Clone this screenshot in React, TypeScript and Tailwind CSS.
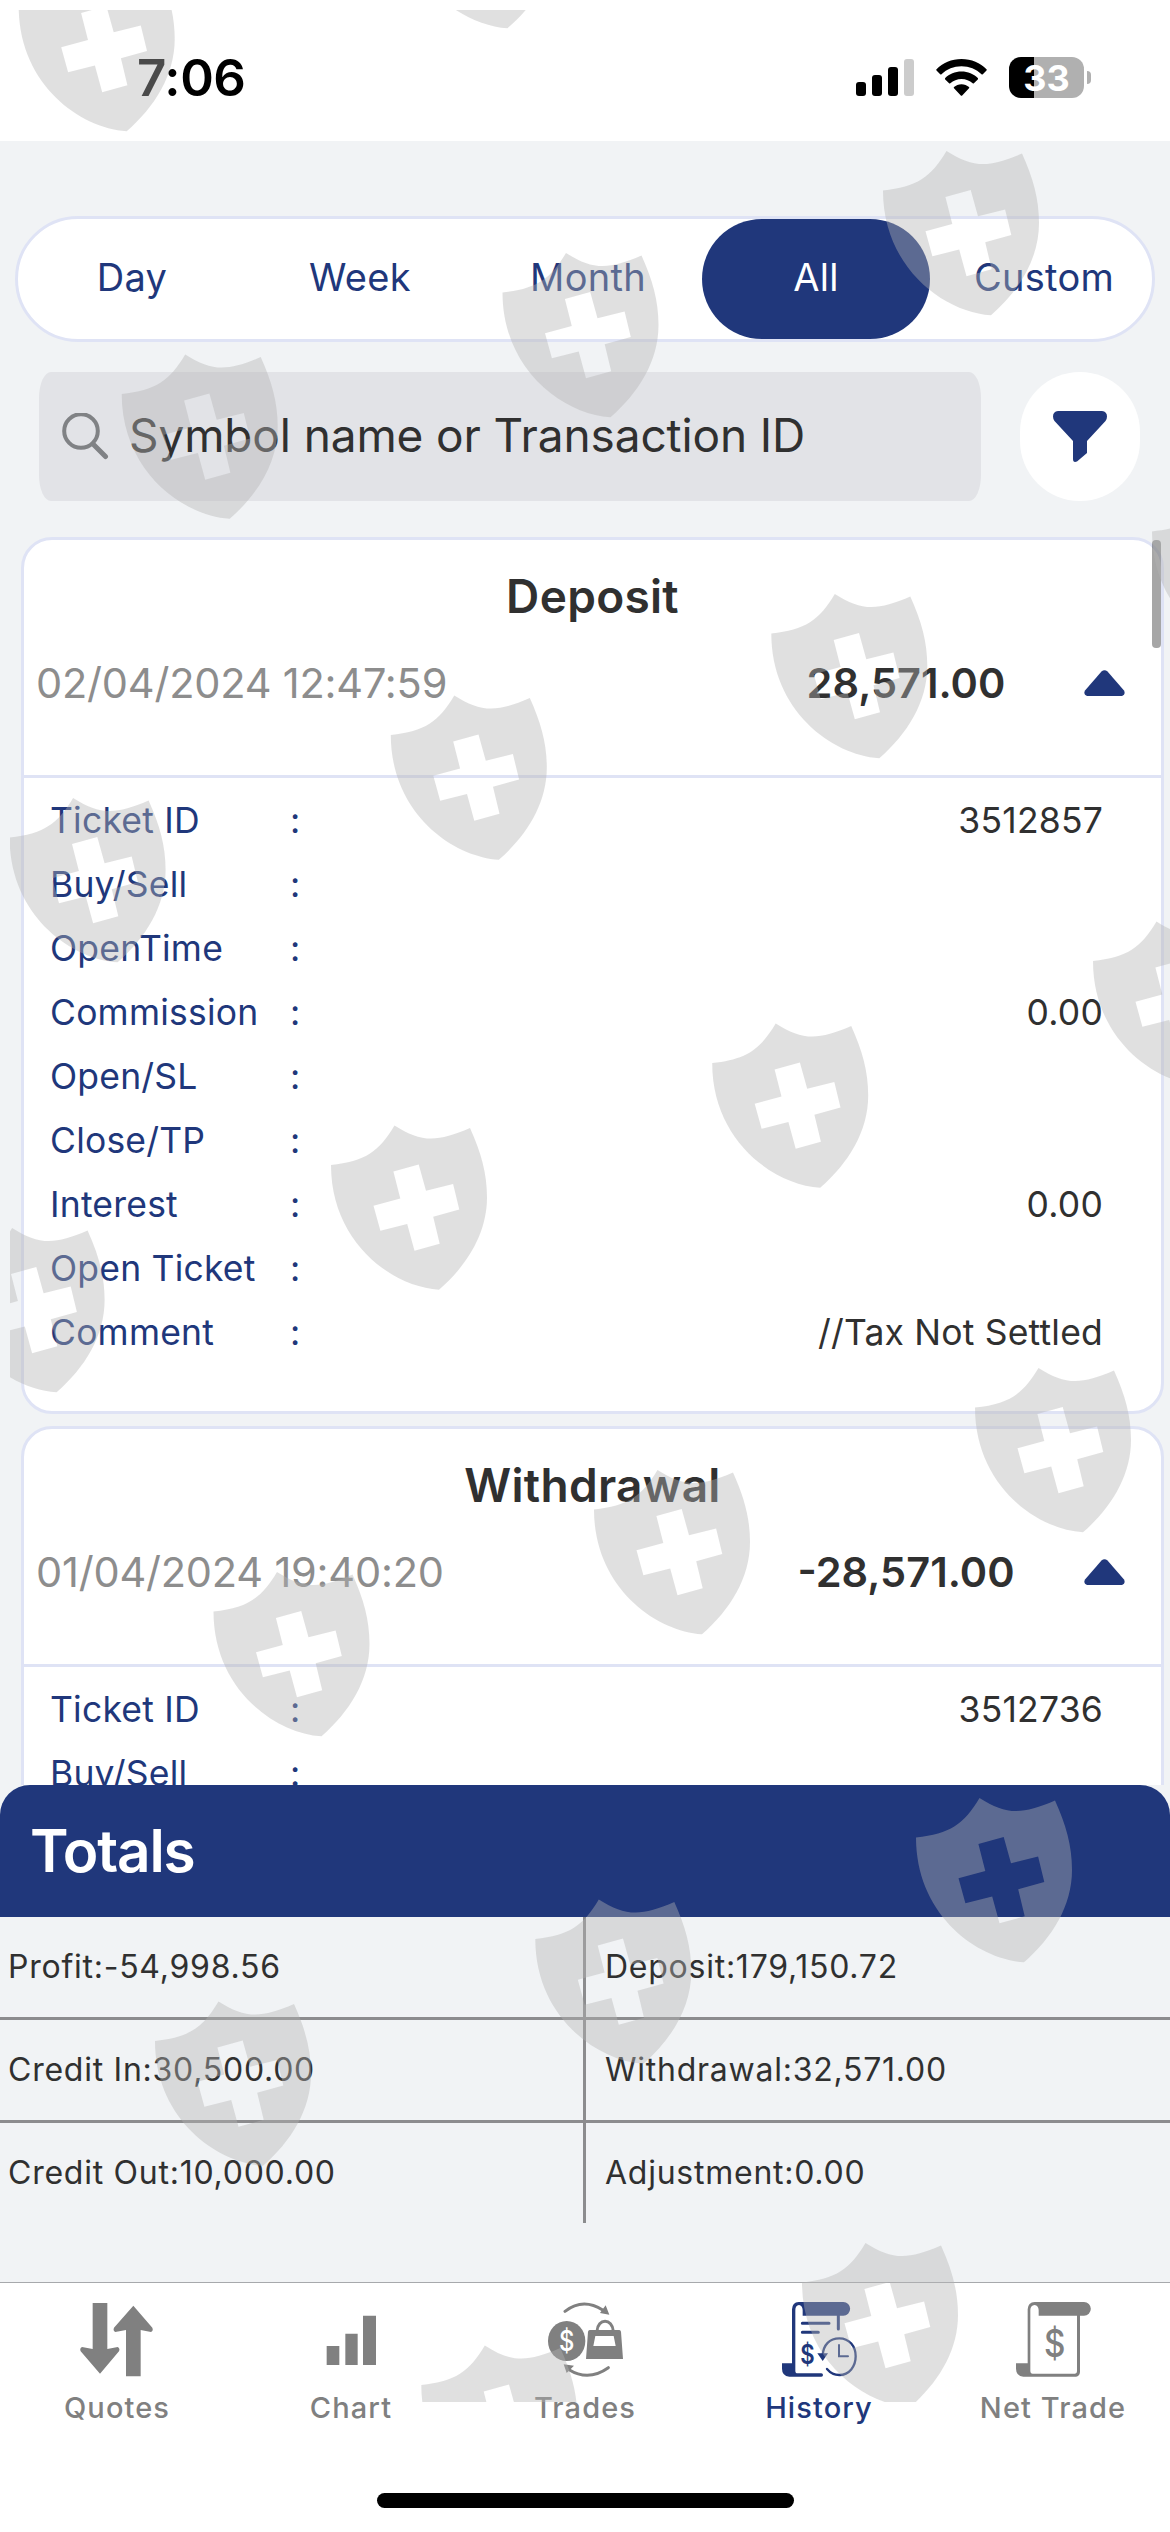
import clsx from 'clsx';
import type { ReactNode } from 'react';

const ranges = ['Day', 'Week', 'Month', 'All', 'Custom'];

const transactions: TransactionProps[] = [
  {
    title: 'Deposit',
    date: '02/04/2024 12:47:59',
    amount: '28,571.00',
    details: [
      { label: 'Ticket ID', value: '3512857' },
      { label: 'Buy/Sell' },
      { label: 'OpenTime' },
      { label: 'Commission', value: '0.00' },
      { label: 'Open/SL' },
      { label: 'Close/TP' },
      { label: 'Interest', value: '0.00' },
      { label: 'Open Ticket' },
      { label: 'Comment', value: '//Tax Not Settled' },
    ],
  },
  {
    title: 'Withdrawal',
    date: '01/04/2024 19:40:20',
    amount: '-28,571.00',
    details: [{ label: 'Ticket ID', value: '3512736' }, { label: 'Buy/Sell' }],
  },
];

const totals = [
  ['Profit:-54,998.56', 'Deposit:179,150.72'],
  ['Credit In:30,500.00', 'Withdrawal:32,571.00'],
  ['Credit Out:10,000.00', 'Adjustment:0.00'],
];

// top left corner of every shield in the overlay
const shields = [
  [18.7, -33],
  [399.5, -136],
  [883, 151],
  [502.5, 253],
  [121.7, 354.5],
  [1152, 492],
  [771.3, 594],
  [390.8, 695.5],
  [9.6, 798],
  [1093, 921.5],
  [712.2, 1023.5],
  [331, 1125.5],
  [-51.4, 1228],
  [975, 1368],
  [594, 1470],
  [213.5, 1572],
  [916, 1798],
  [535.3, 1899.5],
  [155, 2001.5],
  [802, 2243],
  [421.3, 2345.5],
];

export default function App() {
  return (
    <div className="relative flex h-[2532px] w-[1170px] flex-col overflow-hidden bg-[#f1f3f5] font-['Inter','Liberation_Sans',sans-serif] text-[#303030]">
      <StatusBar />
      <RangeTabs />
      <SearchBar />
      <section className="relative mt-9 flex h-[1248px] flex-col gap-3 overflow-hidden pr-1.5 pl-[21px]">
        {transactions.map(item => (
          <TransactionCard key={item.title} {...item} />
        ))}
        <div className="absolute top-[3px] right-[9px] h-[108px] w-[9px] rounded-[4px] bg-black/35" />
      </section>
      <Totals />
      <TabBar />
      <Shields />
    </div>
  );
}

const StatusBar = () => (
  <header className="flex h-[141px] shrink-0 items-start justify-between bg-white pr-[79px] pl-[137px] text-black">
    <span className="mt-[48px] text-[51px] leading-[60px] font-semibold tracking-[-0.4px]">7:06</span>
    <div className="mt-[57px] flex h-[41px] items-center">
      <svg className="mr-[22px] h-[37px] w-[58px]" viewBox="0 0 58 37">
        <rect y="23" width="10" height="14" rx="3" />
        <rect x="16" y="16" width="10" height="21" rx="3" />
        <rect x="32" y="8" width="10" height="29" rx="3" />
        <rect x="48" width="10" height="37" rx="3" fill="#cccccc" />
      </svg>
      <svg className="mr-[22px] h-[37px] w-[51px]" viewBox="0 0 51 37">
        <path d="M25.5 0C35.4 0 44.400 3.900 50.500 10.200C50.900 10.600 50.900 11 50.500 11.400L46.800 15.200C46.400 15.600 45.900 15.600 45.500 15.200C40.200 10.200 33.200 7.300 25.500 7.300S10.800 10.200 5.500 15.200C5.100 15.600 4.600 15.600 4.200 15.200L.5 11.400C.1 11 .1 10.600.5 10.200C6.600 3.900 15.600 0 25.500 0Z" />
        <path d="M25.500 12.600C31.900 12.600 37.700 15.100 41.800 19.100C42.200 19.500 42.200 20 41.800 20.400L37.900 24.300C37.500 24.700 37.100 24.700 36.700 24.300C33.700 21.600 29.800 19.900 25.500 19.900S17.300 21.600 14.300 24.300C13.900 24.700 13.500 24.700 13.100 24.300L9.200 20.400C8.800 20 8.800 19.500 9.200 19.100C13.300 15.100 19.100 12.600 25.500 12.600Z" />
        <path d="M25.500 25.200C28.400 25.200 31 26.300 33 28C33.400 28.400 33.400 28.900 33 29.300L26.200 36.500C25.800 36.900 25.200 36.900 24.800 36.500L18 29.300C17.600 28.900 17.600 28.400 18 28C20 26.300 22.600 25.200 25.500 25.200Z" />
      </svg>
      <div className="flex h-[41px] w-[75px] items-center justify-center rounded-[12px] bg-[linear-gradient(90deg,#000_25px,#b0b0b0_25px)] text-[36px] leading-none font-bold text-white">
        33
      </div>
      <div className="ml-[3px] h-[13px] w-[4px] rounded-r-full bg-[#b0b0b0]" />
    </div>
  </header>
);

const RangeTabs = () => (
  <nav className="mx-[15px] mt-[75px] flex h-[126px] shrink-0 rounded-full border-[3px] border-[#dfe3f5] bg-white">
    {ranges.map(range => (
      <button
        key={range}
        className={clsx(
          'flex w-[228px] shrink-0 items-center justify-center rounded-full pb-[3px] text-[38px] tracking-[0.3px]',
          range === 'All' ? 'bg-[#20377b] text-white' : 'text-[#20377b]',
        )}
      >
        {range}
      </button>
    ))}
  </nav>
);

const SearchBar = () => (
  <div className="mt-[30px] flex h-[129px] shrink-0 justify-between pr-[30px] pl-[39px]">
    <div className="flex w-[942px] items-center rounded-[12px/26px] bg-[#e2e3e7] pl-[22px]">
      <svg className="h-[47px] w-[48px]" viewBox="0 0 48 47" fill="none" stroke="#808285" strokeWidth="4">
        <circle cx="20" cy="18" r="16.800" />
        <path d="M32 31L44.500 43.500" strokeWidth="5" strokeLinecap="round" />
      </svg>
      <span className="ml-5 pb-1 text-[46px] leading-[60px] tracking-[-0.12px]">
        Symbol name or Transaction ID
      </span>
    </div>
    <button className="flex w-[120px] items-center justify-center rounded-full bg-white">
      <svg className="h-[51px] w-[54px]" viewBox="0 0 54 51" fill="#20377b">
        <path d="M5 0H49Q54 .5 54 5.500Q54 8 52.500 10L34 30V42L24 50.500Q20 52 20 48V30L1.500 10Q0 8 0 5.500Q0 .5 5 0Z" />
      </svg>
    </button>
  </div>
);

interface TransactionProps {
  title: string;
  date: string;
  amount: string;
  details: { label: string; value?: string }[];
}

const TransactionCard = ({ title, date, amount, details }: TransactionProps) => (
  <article className="shrink-0 rounded-[31px] border-[3px] border-[#dfe3f5] bg-white pb-[47px]">
    <div className="h-[238px] border-b-[3px] border-[#dfe3f5] pt-7">
      <h3 className="text-center text-[46px] leading-[56px] font-semibold tracking-[0.3px]">{title}</h3>
      <div className="mt-[34px] flex h-[50px] items-center pr-[36px] pl-[12px] text-[41.5px]">
        <span className="w-[702px] shrink-0 tracking-[-0.2px] text-[#8d8d8d]">{date}</span>
        <span className="w-[336px] shrink-0 text-center font-semibold">{amount}</span>
        <svg className="ml-auto h-[26px] w-[41px]" viewBox="0 0 41 26" fill="#20377b">
          <path d="M17.500 1.500Q20.500-1 23.500 1.500L40 20.500Q42 24.500 38 26H3Q-1 24.500 1 20.500Z" />
        </svg>
      </div>
    </div>
    <dl className="pt-2.5 pr-[58px] pl-[26px] text-[35.5px] leading-[66px] tracking-[0.2px]">
      {details.map(({ label, value }) => (
        <div key={label} className="flex h-16">
          <dt className="w-[240px] text-[#20377b]">{label}</dt>
          <span className="text-[#20377b]">:</span>
          <dd className="ml-auto">{value}</dd>
        </div>
      ))}
    </dl>
  </article>
);

const Totals = () => (
  <section className="shrink-0">
    <h2 className="flex h-[132px] items-center rounded-t-[30px] bg-[#20377b] pl-[30px] text-[58.5px] font-semibold tracking-[-1.2px] text-white">
      Totals
    </h2>
    <div className="text-[32px] tracking-[0.75px]">
      {totals.map(([left, right], i) => (
        <div
          key={left}
          className={clsx('flex border-[#8c8c8e]', i < 2 ? 'h-[103px] border-b-[3px]' : 'h-[100px]')}
        >
          <span className="flex w-[586px] items-center border-r-[3px] border-[#8c8c8e] pl-[8px]">{left}</span>
          <span className="flex items-center pl-[19px]">{right}</span>
        </div>
      ))}
    </div>
  </section>
);

const Icon = ({ children }: { children: ReactNode }) => (
  <svg className="h-[75px] w-[75px]" viewBox="0 0 225 225" fill="currentColor">
    {children}
  </svg>
);

const QuotesIcon = () => (
  <Icon>
    <path d="M38 3H82V141L113 135Q121 139 117 148L60 215L2 148Q-2 139 6 135L38 141Z" />
    <path d="M138 223H182V84L213 90Q221 86 217 77L160 11L102 77Q98 86 106 90L138 84Z" />
  </Icon>
);

const ChartIcon = () => (
  <Icon>
    <path d="M38 132H76V189H38ZM94 95H131V189H94ZM147 41H186V189H147Z" />
  </Icon>
);

const TradesIcon = () => (
  <Icon>
    <g fill="none" stroke="currentColor" strokeWidth="9" strokeLinecap="round">
      <path d="M51 28Q105-14 164 24" />
      <path d="M181 197Q122 239 63 203" />
      <path d="M147 88C149 48 193 48 196 88" strokeLinecap="butt" />
    </g>
    <path d="M184 38L156 33L173 10ZM47 187L78 191L56 213Z" />
    <ellipse cx="56" cy="117" rx="56" ry="60" />
    <path fillRule="evenodd" d="M125 84H214Q218 84 219 89L225 171H114L120 89Q121 84 125 84ZM142 102L136 132H203L197 102Z" />
    <text x="0" y="0" transform="translate(56 148) scale(.85 1)" textAnchor="middle" fontSize="84" fontWeight="500" fill="#fff">
      $
    </text>
  </Icon>
);

const HistoryIcon = () => (
  <Icon>
    <path d="M50 0H184A20.500 20.500 0 0 1 184 41H62V24Q61 10 51 9Q40 10 40 24V206Q40 214 47 214H118A5 5 0 0 1 118 224H22Q0 222 0 200V184H30V22Q31 1 50 0Z" />
    <g fill="none" stroke="currentColor" strokeWidth="9" strokeLinecap="round">
      <path d="M169 40V81M61 64H141M61 91H109" />
      <path d="M122 160C124 128 143 109 172 109C202 109 221 133 221 163S202 219 172 219C157 219 145 213 135 201" strokeWidth="7" />
      <path d="M171 129V163H198" strokeWidth="6" />
    </g>
    <path d="M106 154H138L122 177Z" />
    <text x="0" y="0" transform="translate(76 186) scale(.8 1)" textAnchor="middle" fontSize="83" fontWeight="600">
      $
    </text>
  </Icon>
);

const NetTradeIcon = () => (
  <Icon>
    <path d="M56 0H204A20.500 20.500 0 0 1 204 41H68V24Q67 10 56 9Q43 10 43 24V206Q43 215 50 215H177Q183 215 183 208V41H192V210Q191 223 180 224H22Q0 222 0 200V184H35V22Q36 1 56 0Z" />
    <text x="0" y="0" transform="translate(116 164) scale(.88 1)" textAnchor="middle" fontSize="113" fontWeight="500">
      $
    </text>
  </Icon>
);

const tabs = [
  { label: 'Quotes', icon: <QuotesIcon /> },
  { label: 'Chart', icon: <ChartIcon /> },
  { label: 'Trades', icon: <TradesIcon /> },
  { label: 'History', icon: <HistoryIcon />, active: true },
  { label: 'Net Trade', icon: <NetTradeIcon /> },
];

const TabBar = () => (
  <footer className="mt-[59px] flex flex-1 flex-col items-center border-t border-[#a7a9ac] bg-white">
    <nav className="flex w-full">
      {tabs.map(({ label, icon, active }) => (
        <button
          key={label}
          className={clsx(
            'flex w-[234px] flex-col items-center pt-[19px]',
            active ? 'text-[#20377b]' : 'text-[#808080]',
          )}
        >
          {icon}
          <span className="mt-[14px] text-[29px] leading-[34px] font-medium tracking-[1.1px]">{label}</span>
        </button>
      ))}
    </nav>
    <div className="mt-[68px] h-[15px] w-[417px] rounded-full bg-black" />
  </footer>
);

const Shields = () => (
  <svg
    className="pointer-events-none absolute top-[10px] left-[10px] h-[2392px] w-[1160px]"
    viewBox="10 10 1160 2392"
    fill="#b3b3b3"
    fillOpacity="0.41"
  >
    {shields.map(([x, y]) => (
      <path
        key={`${x}-${y}`}
        transform={`translate(${x} ${y})`}
        fillRule="evenodd"
        d="M0 39.500C34 36 48 26 63.500 0C90 17 106 17 139 2.600C150 27 156 48 156 72C156 108 136 140 108 164.300C60 161 0 116 0 39.500ZM62.400 46L87.700 39L95 65.300L122.100 58.600L128.300 84L102.200 91.300L108.700 118.300L83.500 125.300L76.200 98.600L49.400 105.300L42.500 80.300L69.300 73Z"
      />
    ))}
  </svg>
);
